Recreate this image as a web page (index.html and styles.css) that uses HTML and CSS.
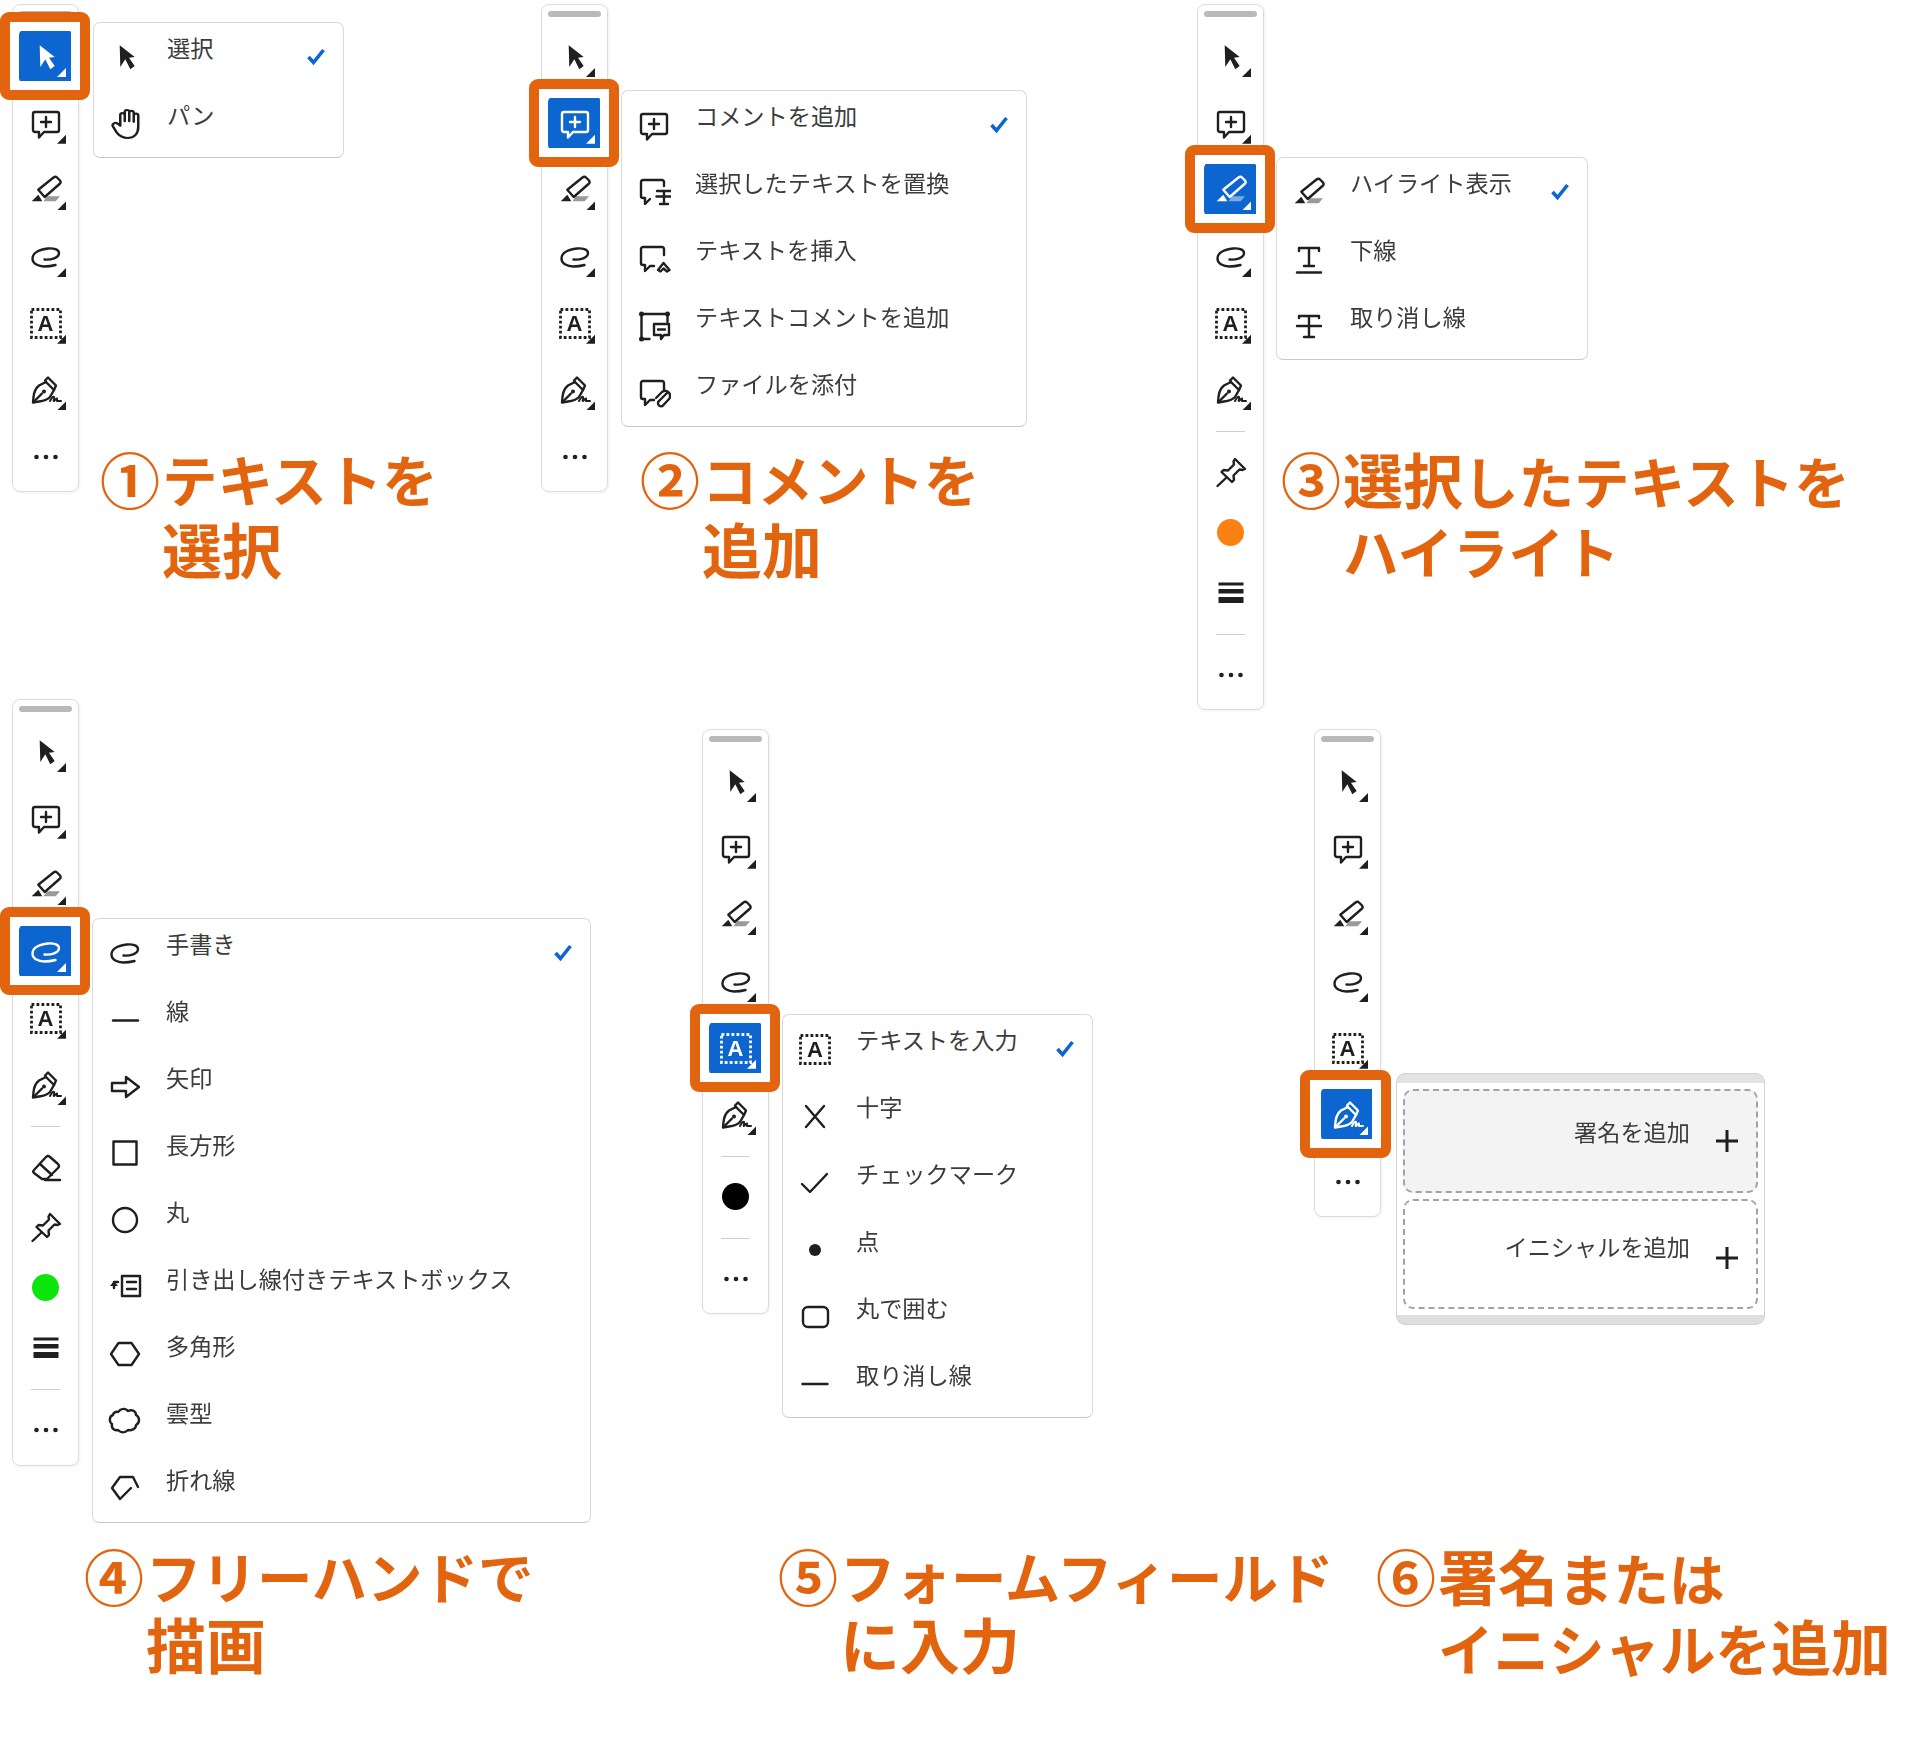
FILE: index.html
```html
<!DOCTYPE html>
<html lang="ja">
<head>
<meta charset="utf-8">
<title>注釈ツール</title>
<link rel="stylesheet" href="styles.css">
</head>
<body>
<svg class="defs" width="0" height="0" aria-hidden="true">
  <symbol id="arrow" viewBox="0 0 34 34"><path class="f" d="M10.7 5.3L11.3 27l5-7.7 5 10 4.400-3.300-5.700-8.300 5.700-.7z"/></symbol>
  <symbol id="comment" viewBox="0 0 34 34"><path class="s" d="M6 6h22a2 2 0 0 1 2 2v16a2 2 0 0 1-2 2H15l-5 5.500V26H6a2 2 0 0 1-2-2V8a2 2 0 0 1 2-2z"/><path class="s" d="M17 11v10M12 16h10"/></symbol>
  <symbol id="marker" viewBox="0 0 34 34"><path class="s" d="M9.300 16.700L24.500 4.500q2-1.500 3.500 0l3 3q1.500 2.300-.5 3.500L15.700 24z"/><path class="f" d="M2.700 28.300l6.600-6.600 4 6.600z"/><path class="f shade" d="M18.300 23.300H31l-4.300 5H14.300z"/></symbol>
  <symbol id="free" viewBox="0 0 34 34"><path class="s" d="M15.500 19.500C22 20 30 18 30 13c0-4-6-5-11-4.500C10 9.500 3.500 13 3.500 18.500 3.500 24 10 26.500 15 26.500c4 0 8-.5 11.500-1.500"/></symbol>
  <symbol id="field" viewBox="0 0 34 34"><rect class="s dash" x="2.500" y="3.500" width="29" height="28"/></symbol>
  <symbol id="pen" viewBox="0 0 34 34"><path class="s" d="M4 29.500l.5-5.500C5 19 7 15 10 12.500L17 9l8 8-4 7c-3 3-7 4-11 4.500z"/><path class="s" d="M17 9l-1-1.500L19 4.500l8 8-2 4.500M4.500 29L13 20.500"/><circle class="f" cx="15" cy="18.500" r="2"/><path class="s thin" d="M21 28c1-2 3-5 4-4s-1 4 0 4 2-3 3-2.500V28h4"/></symbol>
  <symbol id="dots" viewBox="0 0 34 34"><circle class="f" cx="7.500" cy="17" r="2.300"/><circle class="f" cx="17" cy="17" r="2.300"/><circle class="f" cx="26.500" cy="17" r="2.300"/></symbol>
  <symbol id="pin" viewBox="0 0 34 34"><path class="s" d="M21 4l10 10-2.500 1-3-.5-6 6 .5 4.500-2 2L7.500 17l2-2 4.500.5 6-6-.5-3z"/><path class="s" d="M12.500 22.500L3.500 31"/></symbol>
  <symbol id="eraser" viewBox="0 0 34 34"><path class="s" d="M5 20L17 7q2-2 4 0l8 7q2 2 0 4L18 29h-5l-8-6q-1.500-1.500 0-3z"/><path class="s" d="M11 14l12 11M16 30h15"/></symbol>
  <symbol id="weight" viewBox="0 0 34 34"><path class="f" d="M4.500 6.500h25v3h-25zM4.500 13h25v4.500h-25zM4.500 21h25v6h-25z"/></symbol>
  <symbol id="hand" viewBox="0 0 34 34"><g transform="translate(0 -2.600) scale(1.250 1.120)"><path class="s thin" d="M9 19V9.500a1.800 1.800 0 0 1 3.600 0V15 6.800a1.800 1.800 0 0 1 3.600 0V15 7.500a1.800 1.800 0 0 1 3.600 0v8V10a1.800 1.800 0 0 1 3.600 0v10c0 7-3.800 10-8.300 10-4.500 0-7-2-9-5l-3-5.500c-1-2 2-4 3.500-2.500z"/></g></symbol>
  <symbol id="replace" viewBox="0 0 34 34"><path class="s" d="M27 11V7a2 2 0 0 0-2-2H6a2 2 0 0 0-2 2v14a2 2 0 0 0 2 2h2v6l5-5"/><path class="s" d="M20 16h14M27 16v12M19.500 21.500h15M23 29h8"/></symbol>
  <symbol id="insert" viewBox="0 0 34 34"><path class="s" d="M27 13V7a2 2 0 0 0-2-2H6a2 2 0 0 0-2 2v14a2 2 0 0 0 2 2h2v6l5-5h4"/><path class="s" d="M21 28l5.500-7 6 7-2.500 1.500-3.500-3-3 3z"/></symbol>
  <symbol id="textnote" viewBox="0 0 34 34"><path class="s" d="M4.500 5h26M4.500 5v25M4.500 30h8M30.500 5v8"/><circle class="f" cx="4.500" cy="5" r="2.500"/><circle class="f" cx="30.500" cy="5" r="2.500"/><circle class="f" cx="4.500" cy="30" r="2.500"/><path class="s" d="M17 15h15v11h-5l-3 4v-4h-7zM21 20.500h7"/></symbol>
  <symbol id="attach" viewBox="0 0 34 34"><path class="s" d="M27 13V7a2 2 0 0 0-2-2H6a2 2 0 0 0-2 2v14a2 2 0 0 0 2 2h2v6l5-5h4"/><path class="s" d="M30 17l-8 8a3 3 0 0 0 4 4.500l6-6.500a5 5 0 0 0-7-7l-6 6"/></symbol>
  <symbol id="under" viewBox="0 0 34 34"><path class="s" d="M7 9V6h20v3M17 6v18M12 24h10M5 30.500h24"/></symbol>
  <symbol id="strike" viewBox="0 0 34 34"><path class="s" d="M7 9V7h20v2M17 7v21M12 28h10M5 17h24"/></symbol>
  <symbol id="line" viewBox="0 0 34 34"><path class="s" d="M5 17.500h25"/></symbol>
  <symbol id="fat" viewBox="0 0 34 34"><path class="s" d="M4 13h14V7l13 10-13 10v-6H4z"/></symbol>
  <symbol id="rect" viewBox="0 0 34 34"><rect class="s" x="5.500" y="4.500" width="23" height="23"/></symbol>
  <symbol id="round" viewBox="0 0 34 34"><circle class="s" cx="17" cy="16" r="12"/></symbol>
  <symbol id="callout" viewBox="0 0 34 34"><path class="s" d="M14 5h18v20H14zM19 11h9M19 18h9M10 11H6v6"/><path class="f" d="M2 15l4-5 4 5z"/></symbol>
  <symbol id="poly" viewBox="0 0 34 34"><path class="s" d="M10.500 5h13L31 16l-7.500 11h-13L3 16z"/></symbol>
  <symbol id="cloud" viewBox="0 0 34 34"><path class="s" d="M10 7c3-4 8-4 10-1 4-2 8 0 8 4 4 2 4 8 0 10 0 4-5 6-8 5-3 3-7 3-10 0-4 1-7-2-6-6-3-2-3-8 1-9 0-2 3-4 5-3z"/></symbol>
  <symbol id="polyline" viewBox="0 0 34 34"><path class="s" d="M30 15L25 5H12L4 16l8 11 11-11"/></symbol>
  <symbol id="cross" viewBox="0 0 34 34"><path class="s" d="M8 7l18 21M26 7L8 28"/></symbol>
  <symbol id="tick" viewBox="0 0 34 34"><path class="s" d="M4 18l8 8L29 8"/></symbol>
  <symbol id="dot" viewBox="0 0 34 34"><circle class="f" cx="17" cy="17" r="6"/></symbol>
  <symbol id="pill" viewBox="0 0 34 34"><rect class="s" x="5" y="7" width="25" height="20" rx="5"/></symbol>
  <symbol id="rule" viewBox="0 0 34 34"><path class="s" d="M4.500 17h25"/></symbol>
  <symbol id="check" viewBox="0 0 20 20"><path class="checkmark" d="M2.500 10l5 5.500L17.500 3"/></symbol>
  <symbol id="plus" viewBox="0 0 24 24"><path class="s heavy" d="M12 1v22M1 12h22"/></symbol>
</svg>

<main class="canvas">

  <section class="fig fig-1">
    <div class="toolbar">
      <span class="grip"></span>
      <div class="tool more active"><svg class="ic"><use href="#arrow"/></svg></div>
      <div class="tool more"><svg class="ic"><use href="#comment"/></svg></div>
      <div class="tool more"><svg class="ic"><use href="#marker"/></svg></div>
      <div class="tool more"><svg class="ic"><use href="#free"/></svg></div>
      <div class="tool more"><span class="fieldmark"><svg class="ic"><use href="#field"/></svg><span class="glyph">A</span></span></div>
      <div class="tool more"><svg class="ic"><use href="#pen"/></svg></div>
      <div class="tool"><svg class="ic"><use href="#dots"/></svg></div>
    </div>
    <div class="menu menu-1">
      <div class="row"><svg class="ic"><use href="#arrow"/></svg><span class="label">選択</span><svg class="tickmark"><use href="#check"/></svg></div>
      <div class="row"><svg class="ic"><use href="#hand"/></svg><span class="label">パン</span></div>
    </div>
  </section>

  <section class="fig fig-2">
    <div class="toolbar">
      <span class="grip"></span>
      <div class="tool more"><svg class="ic"><use href="#arrow"/></svg></div>
      <div class="tool more active"><svg class="ic"><use href="#comment"/></svg></div>
      <div class="tool more"><svg class="ic"><use href="#marker"/></svg></div>
      <div class="tool more"><svg class="ic"><use href="#free"/></svg></div>
      <div class="tool more"><span class="fieldmark"><svg class="ic"><use href="#field"/></svg><span class="glyph">A</span></span></div>
      <div class="tool more"><svg class="ic"><use href="#pen"/></svg></div>
      <div class="tool"><svg class="ic"><use href="#dots"/></svg></div>
    </div>
    <div class="menu menu-2">
      <div class="row"><svg class="ic"><use href="#comment"/></svg><span class="label">コメントを追加</span><svg class="tickmark"><use href="#check"/></svg></div>
      <div class="row"><svg class="ic"><use href="#replace"/></svg><span class="label">選択したテキストを置換</span></div>
      <div class="row"><svg class="ic"><use href="#insert"/></svg><span class="label">テキストを挿入</span></div>
      <div class="row"><svg class="ic"><use href="#textnote"/></svg><span class="label">テキストコメントを追加</span></div>
      <div class="row"><svg class="ic"><use href="#attach"/></svg><span class="label">ファイルを添付</span></div>
    </div>
  </section>

  <section class="fig fig-3">
    <div class="toolbar">
      <span class="grip"></span>
      <div class="tool more"><svg class="ic"><use href="#arrow"/></svg></div>
      <div class="tool more"><svg class="ic"><use href="#comment"/></svg></div>
      <div class="tool more active"><svg class="ic"><use href="#marker"/></svg></div>
      <div class="tool more"><svg class="ic"><use href="#free"/></svg></div>
      <div class="tool more"><span class="fieldmark"><svg class="ic"><use href="#field"/></svg><span class="glyph">A</span></span></div>
      <div class="tool more"><svg class="ic"><use href="#pen"/></svg></div>
      <span class="divider"></span>
      <div class="tool compact"><svg class="ic"><use href="#pin"/></svg></div>
      <div class="tool compact"><span class="swatch swatch-orange"></span></div>
      <div class="tool compact"><svg class="ic"><use href="#weight"/></svg></div>
      <span class="divider"></span>
      <div class="tool"><svg class="ic"><use href="#dots"/></svg></div>
    </div>
    <div class="menu menu-3">
      <div class="row"><svg class="ic"><use href="#marker"/></svg><span class="label">ハイライト表示</span><svg class="tickmark"><use href="#check"/></svg></div>
      <div class="row"><svg class="ic"><use href="#under"/></svg><span class="label">下線</span></div>
      <div class="row"><svg class="ic"><use href="#strike"/></svg><span class="label">取り消し線</span></div>
    </div>
  </section>

  <section class="fig fig-4">
    <div class="toolbar">
      <span class="grip"></span>
      <div class="tool more"><svg class="ic"><use href="#arrow"/></svg></div>
      <div class="tool more"><svg class="ic"><use href="#comment"/></svg></div>
      <div class="tool more"><svg class="ic"><use href="#marker"/></svg></div>
      <div class="tool more active"><svg class="ic"><use href="#free"/></svg></div>
      <div class="tool more"><span class="fieldmark"><svg class="ic"><use href="#field"/></svg><span class="glyph">A</span></span></div>
      <div class="tool more"><svg class="ic"><use href="#pen"/></svg></div>
      <span class="divider"></span>
      <div class="tool compact"><svg class="ic"><use href="#eraser"/></svg></div>
      <div class="tool compact"><svg class="ic"><use href="#pin"/></svg></div>
      <div class="tool compact"><span class="swatch swatch-green"></span></div>
      <div class="tool compact"><svg class="ic"><use href="#weight"/></svg></div>
      <span class="divider"></span>
      <div class="tool"><svg class="ic"><use href="#dots"/></svg></div>
    </div>
    <div class="menu menu-4">
      <div class="row"><svg class="ic"><use href="#free"/></svg><span class="label">手書き</span><svg class="tickmark"><use href="#check"/></svg></div>
      <div class="row"><svg class="ic"><use href="#line"/></svg><span class="label">線</span></div>
      <div class="row"><svg class="ic"><use href="#fat"/></svg><span class="label">矢印</span></div>
      <div class="row"><svg class="ic"><use href="#rect"/></svg><span class="label">長方形</span></div>
      <div class="row"><svg class="ic"><use href="#round"/></svg><span class="label">丸</span></div>
      <div class="row"><svg class="ic"><use href="#callout"/></svg><span class="label">引き出し線付きテキストボックス</span></div>
      <div class="row"><svg class="ic"><use href="#poly"/></svg><span class="label">多角形</span></div>
      <div class="row"><svg class="ic"><use href="#cloud"/></svg><span class="label">雲型</span></div>
      <div class="row"><svg class="ic"><use href="#polyline"/></svg><span class="label">折れ線</span></div>
    </div>
  </section>

  <section class="fig fig-5">
    <div class="toolbar">
      <span class="grip"></span>
      <div class="tool more"><svg class="ic"><use href="#arrow"/></svg></div>
      <div class="tool more"><svg class="ic"><use href="#comment"/></svg></div>
      <div class="tool more"><svg class="ic"><use href="#marker"/></svg></div>
      <div class="tool more"><svg class="ic"><use href="#free"/></svg></div>
      <div class="tool more active"><span class="fieldmark"><svg class="ic"><use href="#field"/></svg><span class="glyph">A</span></span></div>
      <div class="tool more"><svg class="ic"><use href="#pen"/></svg></div>
      <span class="divider"></span>
      <div class="tool compact"><span class="swatch swatch-black"></span></div>
      <span class="divider"></span>
      <div class="tool"><svg class="ic"><use href="#dots"/></svg></div>
    </div>
    <div class="menu menu-5">
      <div class="row"><span class="fieldmark"><svg class="ic"><use href="#field"/></svg><span class="glyph">A</span></span><span class="label">テキストを入力</span><svg class="tickmark"><use href="#check"/></svg></div>
      <div class="row"><svg class="ic"><use href="#cross"/></svg><span class="label">十字</span></div>
      <div class="row"><svg class="ic"><use href="#tick"/></svg><span class="label">チェックマーク</span></div>
      <div class="row"><svg class="ic"><use href="#dot"/></svg><span class="label">点</span></div>
      <div class="row"><svg class="ic"><use href="#pill"/></svg><span class="label">丸で囲む</span></div>
      <div class="row"><svg class="ic"><use href="#rule"/></svg><span class="label">取り消し線</span></div>
    </div>
  </section>

  <section class="fig fig-6">
    <div class="toolbar">
      <span class="grip"></span>
      <div class="tool more"><svg class="ic"><use href="#arrow"/></svg></div>
      <div class="tool more"><svg class="ic"><use href="#comment"/></svg></div>
      <div class="tool more"><svg class="ic"><use href="#marker"/></svg></div>
      <div class="tool more"><svg class="ic"><use href="#free"/></svg></div>
      <div class="tool more"><span class="fieldmark"><svg class="ic"><use href="#field"/></svg><span class="glyph">A</span></span></div>
      <div class="tool more active"><svg class="ic"><use href="#pen"/></svg></div>
      <div class="tool"><svg class="ic"><use href="#dots"/></svg></div>
    </div>
    <div class="sign-panel">
      <div class="sign-box sign-box-hover"><span class="sign-label">署名を追加</span><svg class="sign-plus"><use href="#plus"/></svg></div>
      <div class="sign-box sign-box-plain"><span class="sign-label">イニシャルを追加</span><svg class="sign-plus"><use href="#plus"/></svg></div>
    </div>
  </section>

  <h2 class="cap cap-1"><span class="num">①</span><span class="lines"><span>テキストを</span><span class="big">選択</span></span></h2>
  <h2 class="cap cap-2"><span class="num">②</span><span class="lines"><span>コメントを</span><span class="big">追加</span></span></h2>
  <h2 class="cap cap-3"><span class="num">③</span><span class="lines"><span><span class="big">選択</span>したテキストを</span><span>ハイライト</span></span></h2>
  <h2 class="cap cap-4"><span class="num">④</span><span class="lines"><span>フリーハンドで</span><span class="big">描画</span></span></h2>
  <h2 class="cap cap-5"><span class="num">⑤</span><span class="lines"><span>フォームフィールド</span><span class="big">に入力</span></span></h2>
  <h2 class="cap cap-6"><span class="num">⑥</span><span class="lines"><span><span class="big">署名</span>または</span><span>イニシャルを<span class="big">追加</span></span></span></h2>

</main>
</body>
</html>
```
FILE: styles.css
```css
* { box-sizing: border-box; }
html, body { margin: 0; background: #fff; }
body {
  font-family: "Noto Sans CJK JP", "Noto Sans", sans-serif;
  color: #383838;
}
.defs { position: absolute; }

.canvas { position: relative; width: 1920px; height: 1750px; overflow: hidden; filter: blur(.4px); }

/* free-canvas figure placement */
.fig { position: absolute; display: flex; align-items: flex-start; gap: 13px; }
.fig-1 { left: 12px; top: 4px; }
.fig-2 { left: 541px; top: 4px; }
.fig-3 { left: 1197px; top: 4px; }
.fig-4 { left: 12px; top: 699px; }
.fig-5 { left: 702px; top: 729px; }
.fig-6 { left: 1314px; top: 729px; }

/* toolbar */
.toolbar {
  width: 67px;
  flex: none;
  display: flex;
  flex-direction: column;
  align-items: center;
  padding: 6px 0 8px;
  background: #fff;
  border: 1px solid #dcdcdc;
  border-radius: 8px;
  box-shadow: 1px 1px 3px rgba(0, 0, 0, .06);
}
.grip {
  width: 53px;
  height: 6px;
  margin-bottom: 13px;
  border-radius: 3px;
  background: #b9b9b9;
}
.tool {
  position: relative;
  width: 53px;
  height: 53px;
  flex: none;
  display: flex;
  align-items: center;
  justify-content: center;
  border-radius: 5px;
  color: #1f1f1f;
}
.tool + .tool { margin-top: 13.700px; }
.tool.compact + .tool.compact { margin-top: 7.500px; }
.divider {
  width: 29px;
  height: 1px;
  margin: 14.500px 0 13.500px;
  background: #cfcfcf;
}
.ic { width: 34px; height: 34px; flex: none; overflow: visible; }

.fieldmark { position: relative; width: 34px; height: 34px; flex: none; display: flex; }
.glyph {
  position: absolute;
  inset: 0;
  font-family: "Liberation Sans", sans-serif;
  font-size: 22px;
  font-weight: 700;
  line-height: 35px;
  text-align: center;
  color: currentColor;
}

.tool.more::before {
  content: "";
  position: absolute;
  right: 6px;
  bottom: 6px;
  width: 9px;
  height: 9px;
  background: currentColor;
  clip-path: polygon(100% 0, 100% 100%, 0 100%);
}
.tool.active { background: #0d66d0; color: #fff; }
.tool.active::after {
  content: "";
  position: absolute;
  inset: -18px -18px -17px -19px;
  border: 10px solid #e2640f;
  border-radius: 9px;
  box-shadow: inset 0 0 0 9px #fff;
}
.fig-6 .tool.active::after { left: -21px; right: -17px; }

.swatch { width: 27px; height: 27px; border-radius: 50%; }
.swatch-orange { background: #fb8212; }
.swatch-green { background: #0ce60c; }
.swatch-black { background: #000; }

/* icon paint */
.s { fill: none; stroke: currentColor; stroke-width: 2.400; stroke-linejoin: round; stroke-linecap: round; }
.s.thin { stroke-width: 2; }
.s.heavy { stroke-width: 3; stroke-linecap: butt; }
.s.dash { stroke-width: 2.800; stroke-dasharray: 2.800 2.200; stroke-linecap: butt; stroke-linejoin: miter; }
.f { fill: currentColor; }
.f.shade { opacity: .45; }
.checkmark { fill: none; stroke: #0d66d0; stroke-width: 3.600; stroke-linejoin: miter; }

/* popup menus */
.menu {
  flex: none;
  display: flex;
  flex-direction: column;
  padding: 0;
  background: #fff;
  border: 1px solid #d9d9d9;
  border-bottom-color: #c9c9c9;
  border-radius: 7px;
}
.menu-1 { width: 251px; margin: 18px 0 0 1px; }
.menu-2 { width: 406px; margin-top: 86px; }
.menu-3 { width: 312px; margin-top: 153px; margin-left: -1px; }
.menu-4 { width: 499px; margin-top: 219px; }
.menu-5 { width: 311px; margin-top: 285px; }
.row {
  height: 67px;
  display: flex;
  align-items: center;
  padding: 0 17px 0 15px;
  color: #1f1f1f;
}
.label {
  margin: 0 0 19.500px 24px;
  font-size: 23.200px;
  line-height: 32px;
  color: #3c3c3c;
  white-space: nowrap;
}
.tickmark { width: 20px; height: 20px; margin-left: auto; flex: none; }

/* signature panel */
.sign-panel {
  width: 369px;
  height: 252px;
  flex: none;
  margin: 344px 0 0 2px;
  padding: 15px 6px 15px;
  display: flex;
  flex-direction: column;
  gap: 6px;
  background: linear-gradient(#e3e3e3 9px, #fff 9px, #fff calc(100% - 9px), #dedede calc(100% - 9px));
  border: 1px solid #d2d2d2;
  border-radius: 9px;
}
.sign-box {
  display: flex;
  align-items: center;
  justify-content: flex-end;
  padding-right: 17px;
  border: 2px dashed #a3a3a3;
  border-radius: 10px;
  color: #1f1f1f;
}
.sign-box-hover { background: #f3f3f3; flex: 105; }
.sign-box-plain { flex: 111; }
.sign-label { font-size: 23.200px; line-height: 32px; color: #3c3c3c; margin: 0 25px 21px 0; white-space: nowrap; }
.sign-box-plain .sign-label { margin-bottom: 16px; }
.sign-plus { width: 24px; height: 24px; flex: none; }
.sign-box-plain .sign-plus { margin-top: 7px; }

/* orange captions */
.cap {
  position: absolute;
  margin: 0;
  display: flex;
  font-size: 55.500px;
  line-height: 70px;
  font-weight: 700;
  color: #e2640f;
  white-space: nowrap;
}
.num { width: 62px; flex: none; font-size: 60px; }
.lines { display: flex; flex-direction: column; }
.big { font-size: 60px; }
.cap-1 { left: 100px; top: 443px; }
.cap-2 { left: 640px; top: 443px; }
.cap-3 { left: 1281px; top: 443px; }
.cap-4 { left: 84px; top: 1541px; line-height: 68px; }
.cap-5 { left: 778px; top: 1541px; line-height: 68px; }
.cap-6 { left: 1376px; top: 1541px; line-height: 68px; }
```
